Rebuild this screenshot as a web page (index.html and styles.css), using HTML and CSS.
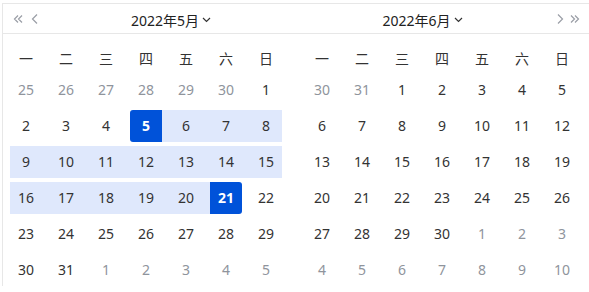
FILE: index.html
```html
<!DOCTYPE html>
<html lang="zh-CN">
<head>
  <meta charset="UTF-8">
  <title>日期范围</title>
  <link rel="stylesheet" href="styles.css">
</head>
<body>
  <div class="range-picker">
    <div class="panel panel-left">
      <div class="panel-head">
        <div class="nav">
          <svg class="nav-icon" width="12" height="12" viewBox="0 0 12 12"><path d="M6 2.5L2.5 6 6 9.5M10 2.5L6.5 6 10 9.5" fill="none" stroke="#9a9ea6" stroke-width="1.2"/></svg>
          <svg class="nav-icon" width="12" height="12" viewBox="0 0 12 12"><path d="M8 1.5L3.5 6 8 10.5" fill="none" stroke="#9a9ea6" stroke-width="1.2"/></svg>
        </div>
        <div class="title">2022年5月<svg width="9" height="6" viewBox="0 0 9 6"><path d="M1 1l3.5 3.5L8 1" fill="none" stroke="#333" stroke-width="1.2"/></svg></div>
      </div>
      <div class="weekdays">
        <span>一</span><span>二</span><span>三</span><span>四</span><span>五</span><span>六</span><span>日</span>
      </div>
      <div class="days" id="may"></div>
    </div>
    <div class="panel panel-right">
      <div class="panel-head">
        <div class="title">2022年6月<svg width="9" height="6" viewBox="0 0 9 6"><path d="M1 1l3.5 3.5L8 1" fill="none" stroke="#333" stroke-width="1.2"/></svg></div>
        <div class="nav">
          <svg class="nav-icon" width="12" height="12" viewBox="0 0 12 12"><path d="M4 1.5L8.5 6 4 10.5" fill="none" stroke="#9a9ea6" stroke-width="1.2"/></svg>
          <svg class="nav-icon" width="12" height="12" viewBox="0 0 12 12"><path d="M2 2.5L5.5 6 2 9.5M6 2.5L9.5 6 6 9.5" fill="none" stroke="#9a9ea6" stroke-width="1.2"/></svg>
        </div>
      </div>
      <div class="weekdays">
        <span>一</span><span>二</span><span>三</span><span>四</span><span>五</span><span>六</span><span>日</span>
      </div>
      <div class="days" id="june"></div>
    </div>
  </div>

  <script>
    // month grid: first day shown, days in previous month, days in this month
    function buildMonth(id, prevDays, firstOffset, monthDays, isMay) {
      const grid = document.getElementById(id);
      let html = "";
      for (let i = 0; i < 42; i++) {
        let day, out = false;
        if (i < firstOffset) {
          day = prevDays - firstOffset + i + 1;
          out = true;
        } else if (i - firstOffset < monthDays) {
          day = i - firstOffset + 1;
        } else {
          day = i - firstOffset - monthDays + 1;
          out = true;
        }

        let cls = "cell";
        if (out) cls += " out";
        if (isMay && !out) {
          const col = i % 7;
          if (day === 5) cls += " start";
          else if (day === 21) cls += " end";
          else if (day > 5 && day < 21) {
            cls += " in-range";
            if (col === 0) cls += " row-first";
            if (col === 6) cls += " row-last";
          }
        }
        html += '<div class="' + cls + '"><span>' + day + '</span></div>';
      }
      grid.innerHTML = html;
    }

    buildMonth("may", 30, 6, 31, true);
    buildMonth("june", 31, 2, 30, false);
  </script>
</body>
</html>
```

FILE: styles.css
```css
body {
  margin: 0;
  overflow: hidden;
  background: white;
  font-family: "Noto Sans", "Noto Sans CJK SC", sans-serif;
  color: #333;
}

.range-picker {
  display: flex;
  width: 592px;
  margin: 3px 0 0 2px;
  border-top: 1px solid #e7e7e7;
  border-left: 1px solid #e7e7e7;
}

.panel {
  flex: none;
}

.panel-left {
  padding-left: 3px;
  padding-right: 8px;
  width: 280px;
}

.panel-right {
  padding-left: 8px;
  padding-right: 3px;
  width: 288px;
}

.panel-head {
  display: flex;
  align-items: center;
  height: 29px;
  border-bottom: 1px solid #e7e7e7;
}

.panel-left .panel-head {
  margin-left: -3px;
  margin-right: -8px;
}

.panel-right .panel-head {
  margin-left: -8px;
}

.nav {
  display: flex;
  align-items: center;
  gap: 5px;
  padding: 0 7px 0 9px;
}

.panel-right .nav {
  gap: 3px;
  padding: 0 9px 0 3px;
}

.title {
  flex: 1;
  display: flex;
  align-items: center;
  justify-content: center;
  gap: 3px;
  font-size: 14px;
  color: #222;
  padding-top: 2px;
}

.title svg {
  margin-top: 1px;
}

.weekdays {
  display: grid;
  grid-template-columns: repeat(7, 40px);
  margin-top: 8px;
  height: 32px;
  align-items: center;
  justify-items: center;
  font-family: "Noto Sans CJK SC", sans-serif;
  font-size: 14px;
  color: #333;
}

.days {
  display: grid;
  grid-template-columns: repeat(7, 40px);
  grid-auto-rows: 32px;
  row-gap: 4px;
  font-size: 14px;
}

.cell {
  display: flex;
  justify-content: center;
  color: #333;
}

.cell span {
  width: 32px;
  height: 32px;
  line-height: 32px;
  text-align: center;
  border-radius: 3px;
}

.cell.out {
  color: #8f949c;
}

.cell.in-range {
  background: #dfe8fc;
}

.cell.in-range.row-first {
  background: linear-gradient(to right, transparent 4px, #dfe8fc 4px);
}

.cell.in-range.row-last {
  background: linear-gradient(to left, transparent 4px, #dfe8fc 4px);
}

.cell.start {
  background: linear-gradient(to right, transparent 50%, #dfe8fc 50%);
}

.cell.end {
  background: linear-gradient(to left, transparent 50%, #dfe8fc 50%);
}

.cell.start span,
.cell.end span {
  background: #0052d9;
  color: white;
  font-weight: bold;
}

.cell.start span {
  border-radius: 3px 0 0 3px;
}

.cell.end span {
  border-radius: 0 3px 3px 0;
}
```
